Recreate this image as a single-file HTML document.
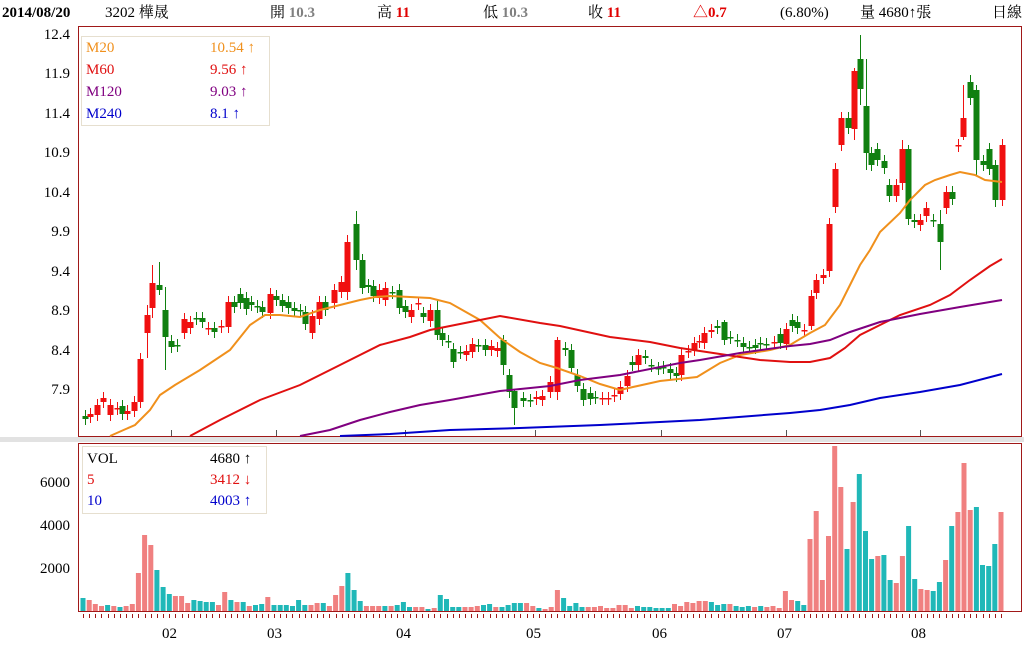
<!DOCTYPE html>
<html><head><meta charset="utf-8">
<style>
html,body{margin:0;padding:0;background:#fff;width:1024px;height:662px;overflow:hidden;font-family:"Liberation Serif","Noto Serif CJK SC","Noto Sans CJK TC",serif;}
.t{position:absolute;white-space:nowrap;font-size:15px;line-height:16px;}
</style></head><body>
<div class="t" style="left:2px;top:5px;font-weight:bold;">2014/08/20</div>
<div class="t" style="left:105px;top:5px;">3202 樺晟</div>
<div class="t" style="left:270px;top:5px;">開 <span style="color:#808080;font-weight:bold">10.3</span></div>
<div class="t" style="left:377px;top:5px;">高 <b style="color:#e00000">11</b></div>
<div class="t" style="left:483px;top:5px;">低 <span style="color:#808080;font-weight:bold">10.3</span></div>
<div class="t" style="left:588px;top:5px;">收 <b style="color:#e00000">11</b></div>
<div class="t" style="left:693px;top:5px;color:#e00000;font-weight:bold">△0.7</div>
<div class="t" style="left:780px;top:5px;">(6.80%)</div>
<div class="t" style="left:860px;top:5px;">量 4680↑張</div>
<div class="t" style="left:992px;top:5px;">日線</div>
<div class="t" style="right:954px;top:27px;">12.4</div>
<div class="t" style="right:954px;top:66px;">11.9</div>
<div class="t" style="right:954px;top:106px;">11.4</div>
<div class="t" style="right:954px;top:145px;">10.9</div>
<div class="t" style="right:954px;top:185px;">10.4</div>
<div class="t" style="right:954px;top:224px;">9.9</div>
<div class="t" style="right:954px;top:264px;">9.4</div>
<div class="t" style="right:954px;top:303px;">8.9</div>
<div class="t" style="right:954px;top:343px;">8.4</div>
<div class="t" style="right:954px;top:382px;">7.9</div>
<div class="t" style="right:954px;top:475px;">6000</div>
<div class="t" style="right:954px;top:518px;">4000</div>
<div class="t" style="right:954px;top:561px;">2000</div>
<div class="t" style="left:162px;top:626px;">02</div>
<div class="t" style="left:267px;top:626px;">03</div>
<div class="t" style="left:396px;top:626px;">04</div>
<div class="t" style="left:526px;top:626px;">05</div>
<div class="t" style="left:652px;top:626px;">06</div>
<div class="t" style="left:777px;top:626px;">07</div>
<div class="t" style="left:911px;top:626px;">08</div>
<div style="position:absolute;left:0;top:437px;width:1024px;height:5px;background:#e2e2e2"></div>
<svg id="s" width="1024" height="662" style="position:absolute;left:0;top:0" xmlns="http://www.w3.org/2000/svg">
<rect x="78.5" y="26.5" width="943" height="410" fill="none" stroke="#a01818"/>
<rect x="78.5" y="443.5" width="943" height="168" fill="none" stroke="#a01818"/>
<g id="g"></g>
<polyline fill="none" stroke="#f0901c" stroke-width="2" points="110,436 135,425 150,410 160,395 175,385 200,370 230,350 250,325 265,315 280,315 300,317 320,310 340,305 360,300 375,297 390,296 430,298 450,303 480,320 500,338 520,352 540,363 557,368 580,376 600,384 620,390 633,387 660,381 697,377 720,363 740,355 770,350 790,345 810,333 825,325 840,305 850,285 860,265 870,250 880,232 900,213 910,200 925,185 935,180 950,175 960,172 975,175 985,180 1002,182"/>
<polyline fill="none" stroke="#e01010" stroke-width="2" points="190,436 220,420 260,400 300,385 340,365 380,345 410,337 430,330 470,322 500,316 540,323 560,326 610,337 650,342 680,348 720,354 760,360 790,362 810,362 830,358 845,348 860,335 880,325 900,315 930,305 950,295 970,280 990,266 1002,259"/>
<polyline fill="none" stroke="#800080" stroke-width="2" points="300,436 330,430 360,420 390,412 420,405 450,400 500,391 550,386 580,380 620,375 680,363 700,360 740,353 790,346 810,344 830,340 850,332 880,322 920,314 960,307 1002,300"/>
<polyline fill="none" stroke="#0000cc" stroke-width="2" points="340,436 390,434 450,430 520,428 600,425 700,420 790,413 820,410 850,405 880,398 920,392 960,385 1002,374"/>
<rect x="81.5" y="36.5" width="188" height="89" fill="#fff" fill-opacity="0.85" stroke="#e6dfcf"/>
<rect x="82.5" y="446.5" width="184" height="67" fill="#fff" stroke="#e6dfcf"/>
</svg>
<div class="t" style="left:86px;top:40px;color:#f0901c">M20</div><div class="t" style="left:210px;top:40px;color:#f0901c">10.54 ↑</div>
<div class="t" style="left:86px;top:62px;color:#e01010">M60</div><div class="t" style="left:210px;top:62px;color:#e01010">9.56 ↑</div>
<div class="t" style="left:86px;top:84px;color:#800080">M120</div><div class="t" style="left:210px;top:84px;color:#800080">9.03 ↑</div>
<div class="t" style="left:86px;top:106px;color:#0000cc">M240</div><div class="t" style="left:210px;top:106px;color:#0000cc">8.1 ↑</div>
<div class="t" style="left:87px;top:451px;">VOL</div><div class="t" style="left:210px;top:451px;">4680 ↑</div>
<div class="t" style="left:87px;top:472px;color:#e01010">5</div><div class="t" style="left:210px;top:472px;color:#e01010">3412 ↓</div>
<div class="t" style="left:87px;top:493px;color:#0000cc">10</div><div class="t" style="left:210px;top:493px;color:#0000cc">4003 ↑</div>
<script>
var C="85,416,419,g;90,414,417,r;97,405,415,r;103,398,402,r;110,405,415,r;117,408,409,r;122,406,414,g;127,411,414,r;134,402,411,r;140,359,402,r;147,315,333,r;152,283,308,r;159,285,290,g;165,310,337,g;171,341,347,g;177,345,346,g;184,319,333,r;190,322,328,r;196,318,319,g;202,318,322,g;208,328,329,r;214,328,332,g;221,326,327,r;228,302,327,r;234,302,307,g;240,294,303,g;246,298,309,g;251,302,305,g;257,306,307,g;262,307,312,g;270,294,313,r;276,296,300,g;282,300,306,g;288,302,308,g;294,308,311,g;300,310,311,g;305,312,324,g;312,316,333,r;319,302,319,r;325,302,310,g;334,290,303,r;341,282,292,r;347,242,292,r;356,224,260,g;362,260,288,g;368,285,287,g;373,286,296,g;379,290,298,r;385,288,300,r;392,292,293,g;399,290,308,g;405,306,312,g;411,310,317,r;418,303,304,r;423,313,317,g;430,310,321,r;437,310,335,g;442,333,340,g;448,341,342,g;453,349,362,g;460,352,353,g;466,351,355,r;472,344,352,r;478,345,346,g;485,345,350,g;491,346,350,r;497,348,351,r;503,340,365,g;509,375,392,g;514,391,408,g;523,398,401,g;530,400,401,g;536,397,399,r;542,396,400,r;550,382,392,r;557,340,392,r;565,348,350,g;571,350,368,g;577,375,386,g;583,389,400,g;590,393,399,g;595,397,398,g;602,398,399,r;608,398,399,r;614,395,396,r;620,387,394,r;627,376,386,r;632,362,365,g;638,355,365,r;645,356,358,g;651,365,366,g;658,368,369,g;663,367,368,g;670,369,373,g;676,373,376,g;681,355,375,r;688,351,352,r;694,343,350,r;699,341,342,r;704,333,343,r;711,330,332,r;717,326,328,g;724,322,340,g;730,337,338,g;737,340,341,g;743,343,347,g;749,347,348,g;755,345,348,g;760,343,344,g;766,344,345,g;774,342,343,r;780,334,343,g;786,329,344,r;792,320,326,g;797,322,328,g;804,330,331,r;811,296,326,r;816,280,293,r;823,275,278,r;829,224,271,r;835,169,207,r;841,118,145,r;848,118,128,g;854,71,129,r;860,59,89,g;866,106,153,g;871,153,165,g;877,149,160,g;884,161,168,g;889,185,196,g;896,185,196,r;902,149,183,r;908,149,219,g;914,220,222,g;920,220,225,r;926,208,216,r;933,220,221,g;940,224,242,g;946,192,208,r;952,192,199,g;958,145,146,r;963,118,137,r;970,82,98,g;976,90,160,g;983,161,165,g;989,149,169,g;995,165,200,g;1002,145,200,r";
var W={860:[35,105],866:[59,170],854:[68,140],902:[140,190],908:[145,225],976:[85,175],970:[75,105],963:[85,140],940:[210,270],995:[160,207],356:[211,270],347:[235,300],152:[265,318],147:[305,358],165:[287,370],159:[262,295],437:[300,340],503:[335,375],514:[390,425],557:[337,400],724:[320,345],811:[290,330]};
var h="";C.split(";").forEach(function(s){var a=s.split(","),x=+a[0],y1=+a[1],y2=+a[2],col=a[3]=="r"?"#f01010":"#108010";var w=W[x]||[y1-6,y2+6];
h+='<line x1="'+(x+.5)+'" x2="'+(x+.5)+'" y1="'+w[0]+'" y2="'+w[1]+'" stroke="'+col+'"/>';
h+='<rect x="'+(x-2.5)+'" y="'+y1+'" width="6" height="'+Math.max(1.5,y2-y1)+'" fill="'+col+'"/>';});
var V="598t600r604r606r605t606r607t606r604r573r535r545r570t587t594t596r596r603r600t601t602t602t605r592r600t602r602t606r605t604t597r605t605t605t606t600t605t605r603r603t606r595r586r573t590t601t606r606r606r"+
"606t606r605t602t607t607r607r609t608r595t599t607t607t607r607r606r605t604t607r607t605t603t603t603r606r608t609r607r590r598t606t603t607t607r607r606r608r608r605r605r608r606t607t607t608t608t608t604r606r602r603r601r601r602t605t604t604r606t607t606t607r606t607r606r608r591r600r601t"+
"605t539r511r580r536r446r487r549t502r474t531t559t556r555t580t583r556r526t579t589r590r591t582t560r526t512r463r510r507t565t566t544t512r";
var vs=V.match(/\d+[rt]/g),n=vs.length,st=(1001-83)/(n-1);
for(var i=0;i<n;i++){var x=83+i*st,t=+vs[i].slice(0,-1),red=vs[i].slice(-1)=="r",k=Math.round(x);
h+='<rect x="'+(x-2.5).toFixed(1)+'" y="'+t+'" width="5" height="'+(611-t)+'" fill="'+(red?"#f08080":"#20b8b8")+'"/>';
h+='<line x1="'+(k+.5)+'" x2="'+(k+.5)+'" y1="614" y2="618" stroke="#a01818"/>';}
[171,276,405,535,661,786,920].forEach(function(x){h+='<line x1="'+(x+.5)+'" x2="'+(x+.5)+'" y1="430" y2="436" stroke="#555"/>';});
document.getElementById("g").innerHTML=h;
</script>
</body></html>
